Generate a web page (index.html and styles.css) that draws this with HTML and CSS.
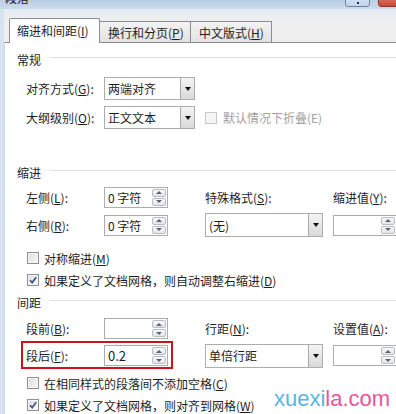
FILE: index.html
```html
<!DOCTYPE html>
<html lang="zh-CN">
<head>
<meta charset="utf-8">
<title>段落</title>
<link rel="stylesheet" href="styles.css">
</head>
<body>
<div class="window">
  <div class="titlebar">
    <span class="title">段落</span>
    <div class="caption-btns">
      <span class="cbtn help"><b class="dot"></b></span>
      <span class="cbtn close"></span>
    </div>
  </div>
  <div class="client">
    <div class="tabs">
      <div class="tab active">缩进和间距(<u>I</u>)</div>
      <div class="tab">换行和分页(<u>P</u>)</div>
      <div class="tab">中文版式(<u>H</u>)</div>
    </div>
    <div class="panel">
      <div class="group-title first"><span>常规</span></div>
      <div class="grid general">
        <span class="lbl c1">对齐方式(<u>G</u>):</span>
        <div class="select c2"><span>两端对齐</span><i class="dd"></i></div>
        <span class="lbl c1">大纲级别(<u>O</u>):</span>
        <div class="select c2"><span>正文文本</span><i class="dd"></i></div>
        <div class="check disabled c4"><i class="cb"></i><span>默认情况下折叠(E)</span></div>
      </div>

      <div class="group-title sec"><span>缩进</span></div>
      <div class="grid cols indent">
        <span class="lbl">左侧(<u>L</u>):</span>
        <div class="spin"><span>0 字符</span><span class="spinbtns"><i class="up"></i><i class="down"></i></span></div>
        <span class="lbl c4">特殊格式(<u>S</u>):</span>
        <span class="lbl c6">缩进值(<u>Y</u>):</span>
        <span class="lbl c1">右侧(<u>R</u>):</span>
        <div class="spin"><span>0 字符</span><span class="spinbtns"><i class="up"></i><i class="down"></i></span></div>
        <div class="select tall c4"><span>(无)</span><i class="dd"></i></div>
        <div class="spin c6"><span></span><span class="spinbtns"><i class="up"></i><i class="down"></i></span></div>
      </div>
      <div class="checks first-checks">
        <div class="check"><i class="cb"></i><span>对称缩进(<u>M</u>)</span></div>
        <div class="check"><i class="cb checked"><svg viewBox="0 0 10 10" width="10" height="10"><path d="M2 5.2 L4.2 7.6 L8.2 2.2" fill="none" stroke="#3f5584" stroke-width="1.7"/></svg></i><span>如果定义了文档网格，则自动调整右缩进(<u>D</u>)</span></div>
      </div>

      <div class="group-title sec2"><span>间距</span></div>
      <div class="grid cols spacing">
        <span class="lbl">段前(<u>B</u>):</span>
        <div class="spin"><span></span><span class="spinbtns"><i class="up"></i><i class="down"></i></span></div>
        <span class="lbl c4">行距(<u>N</u>):</span>
        <span class="lbl c6">设置值(<u>A</u>):</span>
        <div class="hl">
          <span class="lbl">段后(<u>F</u>):</span>
          <div class="spin"><span class="v">0.2</span><span class="spinbtns"><i class="up"></i><i class="down"></i></span></div>
        </div>
        <div class="select tall c4"><span>单倍行距</span><i class="dd"></i></div>
        <div class="spin c6"><span></span><span class="spinbtns"><i class="up"></i><i class="down"></i></span></div>
      </div>
      <div class="checks last-checks">
        <div class="check"><i class="cb"></i><span>在相同样式的段落间不添加空格(<u>C</u>)</span></div>
        <div class="check"><i class="cb checked"><svg viewBox="0 0 10 10" width="10" height="10"><path d="M2 5.2 L4.2 7.6 L8.2 2.2" fill="none" stroke="#3f5584" stroke-width="1.7"/></svg></i><span>如果定义了文档网格，则对齐到网格(<u>W</u>)</span></div>
      </div>
    </div>
  </div>
  <div class="watermark"><span class="wm-blue">xuexi</span><span class="wm-pink">la.com</span></div>
</div>
</body>
</html>
```

FILE: styles.css
```css
* { box-sizing: border-box; }
html, body { margin: 0; padding: 0; }
body {
  width: 396px;
  height: 414px;
  overflow: hidden;
  background: #fff;
  font-family: "Noto Sans CJK SC", "Microsoft YaHei", sans-serif;
  font-size: 12px;
  color: #1e1e1e;
}
u { text-decoration: underline; text-underline-offset: 1px; }

.window {
  position: relative;
  width: 396px;
  height: 414px;
  overflow: hidden;
  background: #d7e3f0;
  display: flex;
  flex-direction: column;
}

/* title bar */
.titlebar {
  height: 9px;
  flex: none;
  display: flex;
  justify-content: space-between;
  background: linear-gradient(#b9cee6, #cbdbed);
}
.title {
  margin-left: 5px;
  margin-top: -9px;
  line-height: 14px;
  font-size: 12px;
  color: #222;
}
.caption-btns {
  display: flex;
  gap: 8px;
  margin-right: -6px;
}
.cbtn {
  display: flex;
  justify-content: center;
  align-items: flex-end;
  height: 14px;
  margin-top: -7px;
  border: 1px solid #6f84a3;
  border-radius: 0 0 3px 3px;
}
.help {
  width: 25px;
  background: linear-gradient(#dbe7f5, #c3d6ec);
  padding-bottom: 2px;
}
.dot {
  width: 2px;
  height: 2px;
  background: #233;
}
.close {
  width: 24px;
  border-color: #8b3a2f;
  background: linear-gradient(#e08a78, #c64a35);
}

/* client */
.client {
  flex: 1;
  margin-left: 4px;
  background: #efefef;
  display: flex;
  flex-direction: column;
  min-height: 0;
}
.tabs {
  height: 33px;
  flex: none;
  display: flex;
  align-items: flex-end;
  padding-left: 5px;
  background: linear-gradient(#e4ebf3, #efefef 40%);
}
.tab {
  height: 21px;
  display: flex;
  align-items: center;
  padding-left: 8px;
  border: 1px solid #8a8d93;
  border-bottom: none;
  background: linear-gradient(#f3f3f3, #e2e2e2);
  margin-left: -1px;
  white-space: nowrap;
}
.tab:nth-child(2) { width: 92px; }
.tab:nth-child(3) { width: 82px; }
.tab.active {
  width: 91px;
  height: 25px;
  margin-left: 0;
  margin-bottom: -1px;
  padding-left: 7px;
  padding-bottom: 2px;
  background: #fff;
  border-radius: 2px 2px 0 0;
  position: relative;
  z-index: 1;
}

.panel {
  flex: 1;
  background: #fff;
  border-top: 1px solid #898c95;
  border-left: 1px solid #cfd7e1;
  padding-left: 12px;
  min-height: 0;
}

.group-title {
  height: 16px;
  display: flex;
  align-items: center;
  gap: 9px;
}
.group-title::after {
  content: "";
  flex: 1;
  height: 1px;
  margin-top: -3px;
  background: #dcdfe3;
}
.group-title.first { margin-top: 8px; }
.group-title.sec { margin-top: 32px; }
.group-title.sec2 { margin-top: 3px; }

.grid {
  display: grid;
  margin-left: 9px;
  align-items: center;
}
.general {
  margin-top: 7px;
  grid-template-columns: 78px 91px 10px 160px;
  grid-template-rows: 29px 29px;
}
.cols {
  grid-template-columns: 78px 64px 37px 118px 10px 64px;
}
.indent {
  margin-top: 3px;
  grid-template-rows: 28px 28px;
}
.spacing {
  margin-top: 5px;
  grid-template-rows: 27px 27px;
}
.c1 { grid-column: 1; }
.c2 { grid-column: 2; }
.c4 { grid-column: 4; }
.c6 { grid-column: 6; }

.lbl { white-space: nowrap; }

.select {
  height: 23px;
  border: 1px solid #abadb3;
  background: #fff;
  display: flex;
  align-items: center;
  justify-content: space-between;
  padding-left: 3px;
  white-space: nowrap;
}
.select.tall { height: 24px; }
.dd {
  width: 14px;
  align-self: stretch;
  border-left: 1px solid #a9a9a9;
  background: linear-gradient(#f4f4f4, #d9d9d9);
  display: flex;
  align-items: center;
  justify-content: center;
}
.dd::after {
  content: "";
  border-left: 3.5px solid transparent;
  border-right: 3.5px solid transparent;
  border-top: 4px solid #111;
}

.spin {
  height: 21px;
  border: 1px solid #abadb3;
  background: #fff;
  display: flex;
  align-items: center;
  justify-content: space-between;
  padding-left: 3px;
  padding-right: 1px;
  white-space: nowrap;
}
.spin .v { font-size: 13px; }
.spinbtns {
  width: 14px;
  align-self: stretch;
  display: flex;
  flex-direction: column;
  gap: 1px;
  padding: 1px 0;
}
.spinbtns i {
  flex: 1;
  border: 1px solid #b8bdc5;
  border-radius: 2px;
  background: linear-gradient(#f7f8fa, #e2e5ea);
  display: flex;
  align-items: center;
  justify-content: center;
}
.spinbtns i.up::after {
  content: "";
  border-left: 3px solid transparent;
  border-right: 3px solid transparent;
  border-bottom: 3px solid #5c6470;
}
.spinbtns i.down::after {
  content: "";
  border-left: 3px solid transparent;
  border-right: 3px solid transparent;
  border-top: 3px solid #5c6470;
}

.hl {
  grid-column: 1 / 3;
  align-self: stretch;
  display: grid;
  grid-template-columns: 78px 64px;
  align-items: center;
  position: relative;
}
.hl::after {
  content: "";
  position: absolute;
  left: -5px;
  right: -5px;
  top: -1px;
  bottom: 0;
  border: 2px solid #c9141e;
}

.checks { margin-left: 10px; }
.first-checks { margin-top: 8px; }
.last-checks { margin-top: 3px; }
.check {
  height: 22px;
  display: flex;
  align-items: center;
  gap: 5px;
  white-space: nowrap;
}
.general .check { height: auto; gap: 6px; }
.cb {
  width: 12px;
  height: 12px;
  flex: none;
  border: 1px solid #8f8f8f;
  background: linear-gradient(135deg, #d9dadc, #fbfbfb);
  box-shadow: inset 0 0 0 1px #f6f6f6;
  display: flex;
  align-items: center;
  justify-content: center;
}
.cb svg { display: block; }
.check.disabled { color: #a2a2a2; }
.check.disabled .cb {
  border-color: #c8c8c8;
  background: #f4f4f4;
}

.watermark {
  position: absolute;
  left: 274px;
  top: 388px;
  font-family: "Liberation Sans", Arial, sans-serif;
  font-size: 22px;
  line-height: 1;
  white-space: nowrap;
}
.wm-blue { color: #56b6e6; }
.wm-pink { color: #e9559c; }
```
